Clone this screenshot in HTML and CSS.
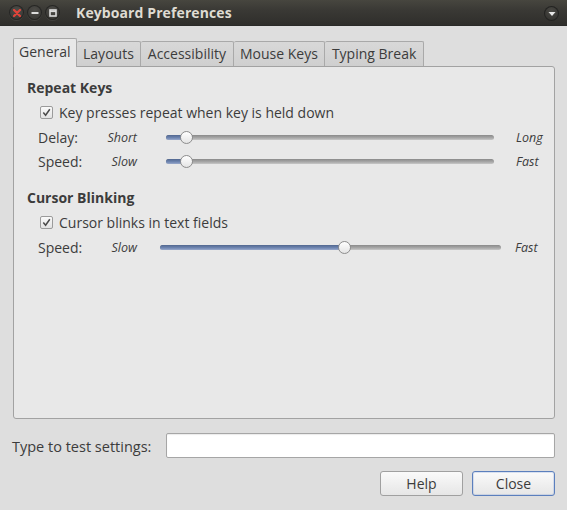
FILE: index.html
```html
<!DOCTYPE html>
<html>
<head>
<meta charset="utf-8">
<link rel="stylesheet" href="styles.css">
</head>
<body>
<div class="window">
  <div class="titlebar">
    <div class="wbtns">
      <span class="wbtn close"><svg width="8" height="8" viewBox="0 0 8 8"><path d="M1 1L7 7M7 1L1 7" stroke="#e0443a" stroke-width="2.2" stroke-linecap="round"/></svg></span>
      <span class="wbtn"><svg width="8" height="8" viewBox="0 0 8 8"><path d="M0.5 4H7.5" stroke="#dcdcdc" stroke-width="2"/></svg></span>
      <span class="wbtn"><svg width="8" height="8" viewBox="0 0 8 8"><rect x="1" y="1" width="6" height="6" fill="none" stroke="#dcdcdc" stroke-width="1.6"/><path d="M1 2.3H7" stroke="#dcdcdc" stroke-width="1.6"/></svg></span>
    </div>
    <div class="title">Keyboard Preferences</div>
    <span class="menu-btn"><svg width="8" height="6" viewBox="0 0 8 6"><path d="M0.5 1H7.5L4 5Z" fill="#e8e8e8"/></svg></span>
  </div>
  <div class="content">
    <div class="tabs">
      <div class="tab active">General</div>
      <div class="tab">Layouts</div>
      <div class="tab">Accessibility</div>
      <div class="tab">Mouse Keys</div>
      <div class="tab">Typing Break</div>
    </div>
    <div class="panel">
      <div class="section-title">Repeat Keys</div>
      <label class="check-row"><span class="checkbox"><svg width="11" height="11" viewBox="0 0 11 11"><path d="M2.3 5.6L4.6 8.3L8.8 2.2" fill="none" stroke="#4a4a4a" stroke-width="1.5"/></svg></span>Key presses repeat when key is held down</label>
      <div class="slider-row r1">
        <span class="lbl">Delay:</span>
        <span class="min">Short</span>
        <div class="slider"><div class="fill" style="width:20px"></div><span class="knob" style="left:20px"></span></div>
        <span class="max">Long</span>
      </div>
      <div class="slider-row r2">
        <span class="lbl">Speed:</span>
        <span class="min">Slow</span>
        <div class="slider"><div class="fill" style="width:20px"></div><span class="knob" style="left:20px"></span></div>
        <span class="max">Fast</span>
      </div>
      <div class="section-title second">Cursor Blinking</div>
      <label class="check-row"><span class="checkbox"><svg width="11" height="11" viewBox="0 0 11 11"><path d="M2.3 5.6L4.6 8.3L8.8 2.2" fill="none" stroke="#4a4a4a" stroke-width="1.5"/></svg></span>Cursor blinks in text fields</label>
      <div class="slider-row r3">
        <span class="lbl">Speed:</span>
        <span class="min">Slow</span>
        <div class="slider wide"><div class="fill" style="width:184px"></div><span class="knob" style="left:184px"></span></div>
        <span class="max">Fast</span>
      </div>
    </div>
    <div class="test-row">
      <span class="test-lbl">Type to test settings:</span>
      <div class="entry"></div>
    </div>
    <div class="buttons">
      <button class="btn">Help</button>
      <button class="btn default">Close</button>
    </div>
  </div>
</div>
</body>
</html>
```
FILE: styles.css
```css
* { box-sizing: border-box; }
html, body { margin: 0; padding: 0; }
body {
  width: 567px;
  height: 510px;
  overflow: hidden;
  background: #dedede;
  font-family: "Open Sans", "DejaVu Sans", sans-serif;
  font-size: 13.5px;
  color: #3c3c3c;
}
.window { width: 567px; height: 510px; display: flex; flex-direction: column; }
.titlebar {
  height: 26px;
  background: linear-gradient(#47463f, #3a3935 40%, #2f2e2b);
  display: flex;
  align-items: center;
  position: relative;
  border-bottom: 1px solid #2a2a28;
}
.wbtns { display: flex; gap: 3px; padding-left: 9px; }
.wbtn {
  width: 15px; height: 15px; border-radius: 50%;
  background: radial-gradient(circle at 50% 35%, #4d4c48, #33322f);
  box-shadow: inset 0 0 0 1px #262624, 0 1px 0 rgba(255,255,255,0.08);
  display: flex; align-items: center; justify-content: center;
}
.title {
  margin-left: 16px;
  color: #dfdbd2;
  font-weight: bold;
  font-size: 14px;
  letter-spacing: 0.1px;
}
.menu-btn {
  position: absolute; right: 8px; top: 6px;
  width: 15px; height: 15px; border-radius: 50%;
  background: radial-gradient(circle at 50% 35%, #4a4944, #2c2b29);
  box-shadow: inset 0 0 0 1px #232321;
  display: flex; align-items: center; justify-content: center;
}
.content { padding: 0 12px 0 13px; display: flex; flex-direction: column; }
.tabs { display: flex; align-items: flex-end; margin-top: 12px; height: 28px; position: relative; z-index: 1; }
.tab {
  height: 25px;
  padding: 0 6.5px 2px;
  border: 1px solid #a9a9a9;
  border-bottom: none;
  border-left: none;
  background: linear-gradient(#d8d8d8, #cfcfcf);
  border-radius: 2px 2px 0 0;
  display: flex; align-items: center;
  font-size: 14px;
}
.tab.active {
  height: 29px;
  margin-bottom: -1px;
  background: #e8e8e8;
  border-left: 1px solid #a9a9a9;
  padding: 0 5px 4px 5px;
}
.panel {
  height: 353px;
  background: #e8e8e8;
  border: 1px solid #a2a2a2;
  border-radius: 0 3px 3px 3px;
  padding: 12px 0 0 13px;
}
.section-title { font-weight: bold; font-size: 14px; line-height: 18px; }
.section-title.second { margin-top: 16px; }
.check-row {
  display: flex; align-items: center;
  margin: 6px 0 0 13px;
  height: 19px;
  font-size: 14px;
}
.checkbox {
  width: 13px; height: 13px;
  border: 1px solid #9b9b9b;
  border-radius: 2px;
  background: linear-gradient(#fafafa, #e2e2e2);
  margin-right: 6px;
  display: flex; align-items: center; justify-content: center;
}
.slider-row { display: flex; align-items: center; height: 24px; padding-left: 11px; }
.slider-row.r1 { margin-top: 3px; }
.slider-row.r3 { margin-top: 3px; }
.lbl { width: 62px; font-size: 14px; }
.min { width: 37px; text-align: right; font-style: italic; font-size: 12.5px; }
.max { font-style: italic; font-size: 12.5px; }
.slider {
  position: relative;
  width: 328px; height: 5px;
  margin: 0 22px 0 29px;
  border-radius: 3px;
  background: linear-gradient(#8a8a8a, #a9a9a9 60%, #c8c8c8);
}
.slider.wide { width: 341px; margin: 0 14px 0 23px; }
.fill {
  position: absolute; left: 0; top: 0; bottom: 0;
  border-radius: 3px 0 0 3px;
  background: linear-gradient(#51678f, #7087b3 60%, #9aaacb);
}
.knob {
  position: absolute; top: -4px; margin-left: -6px;
  width: 13px; height: 13px; border-radius: 50%;
  border: 1px solid #8d8d8d;
  background: linear-gradient(#ffffff, #e4e4e4);
}
.test-row { display: flex; align-items: center; margin-top: 14px; margin-left: -1px; }
.test-lbl { width: 154px; font-size: 14.5px; padding-top: 2px; }
.entry {
  width: 389px; height: 25px;
  background: #fff;
  border: 1px solid #a6a6a6;
  border-radius: 2px;
  box-shadow: inset 0 1px 1px rgba(0,0,0,0.08);
}
.buttons { display: flex; justify-content: flex-end; gap: 9px; margin-top: 13px; }
.btn {
  width: 83px; height: 25px;
  font-family: inherit; font-size: 14px; color: #3c3c3c;
  border: 1px solid #a0a0a0;
  border-radius: 3px;
  background: linear-gradient(#fafafa, #e6e6e6);
  padding: 0;
}
.btn.default { border-color: #5b7fbd; box-shadow: inset 0 0 0 1px rgba(120,150,210,0.25); }
```
